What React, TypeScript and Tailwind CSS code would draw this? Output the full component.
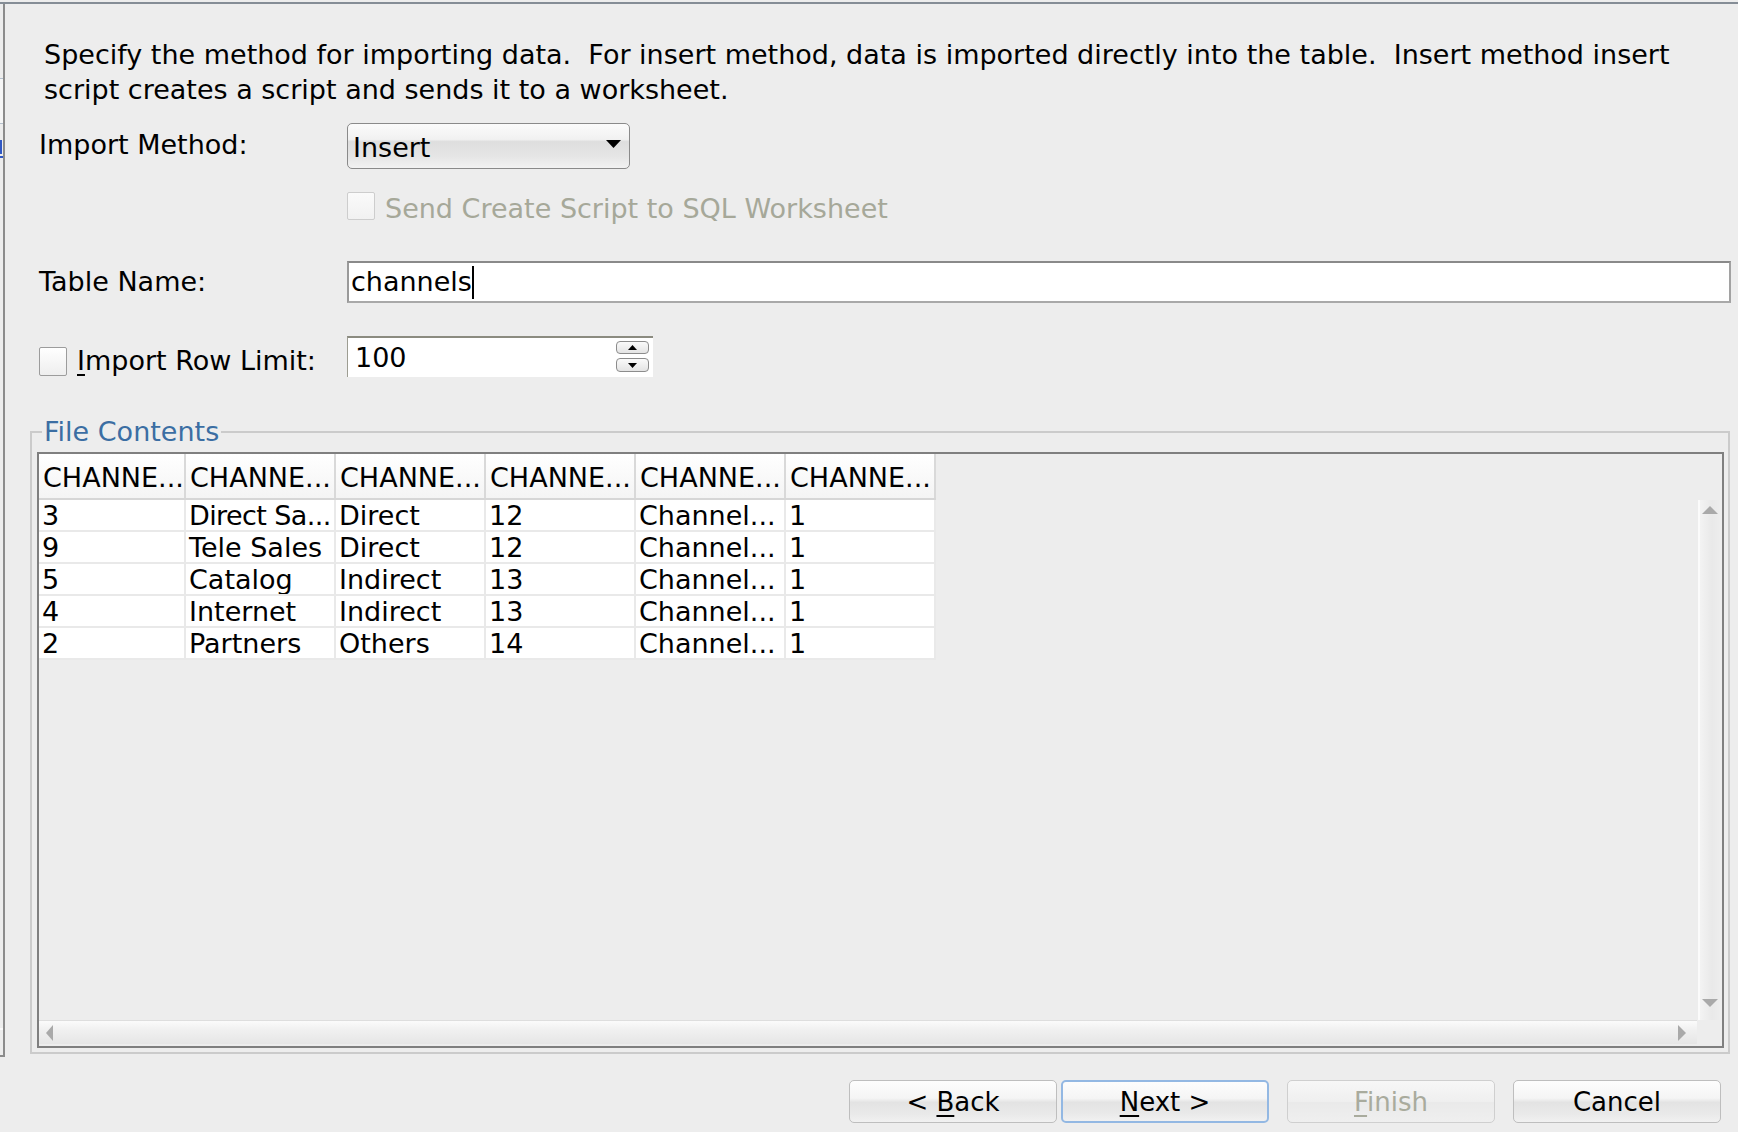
import React from "react";

const TriDown = ({ w = 14, h = 8, color = "#000" }: { w?: number; h?: number; color?: string }) => (
  <svg width={w} height={h} viewBox={`0 0 ${w} ${h}`}>
    <polygon points={`0,0 ${w},0 ${w / 2},${h}`} fill={color} />
  </svg>
);
const TriUp = ({ w = 14, h = 8, color = "#000" }: { w?: number; h?: number; color?: string }) => (
  <svg width={w} height={h} viewBox={`0 0 ${w} ${h}`}>
    <polygon points={`0,${h} ${w},${h} ${w / 2},0`} fill={color} />
  </svg>
);
const TriLeft = ({ w = 8, h = 16, color = "#000" }: { w?: number; h?: number; color?: string }) => (
  <svg width={w} height={h} viewBox={`0 0 ${w} ${h}`}>
    <polygon points={`${w},0 ${w},${h} 0,${h / 2}`} fill={color} />
  </svg>
);
const TriRight = ({ w = 8, h = 16, color = "#000" }: { w?: number; h?: number; color?: string }) => (
  <svg width={w} height={h} viewBox={`0 0 ${w} ${h}`}>
    <polygon points={`0,0 0,${h} ${w},${h / 2}`} fill={color} />
  </svg>
);

const headers = ["CHANNE...", "CHANNE...", "CHANNE...", "CHANNE...", "CHANNE...", "CHANNE..."];
const rows = [
  ["3", "Direct Sa...", "Direct", "12", "Channel...", "1"],
  ["9", "Tele Sales", "Direct", "12", "Channel...", "1"],
  ["5", "Catalog", "Indirect", "13", "Channel...", "1"],
  ["4", "Internet", "Indirect", "13", "Channel...", "1"],
  ["2", "Partners", "Others", "14", "Channel...", "1"],
];
const colW = ["w-[147px]", "w-[150px]", "w-[150px]", "w-[150px]", "w-[150px]", "w-[150px]"];

const btnBase =
  "w-[208px] h-[43px] rounded-[5px] flex items-center justify-center text-[26px] leading-[30px] bg-[linear-gradient(to_bottom,#fdfdfd_0%,#f5f5f5_42%,#e3e3e3_52%,#e9e9e9_80%,#f1f1f1_100%)]";

export default function App() {
  return (
    <div className="w-[1738px] h-[1132px] bg-[#ededed] pt-[2px] overflow-hidden font-['DejaVu_Sans',sans-serif] text-[27px] text-black">
      <div className="flex h-full border-t-2 border-[#858d96]">
        {/* left strip: edge of neighbouring panel */}
        <div className="w-[5px] h-[1053px] flex flex-col border-r-2 border-b-2 border-[#8c8c8c]">
          <div className="h-[74px]" />
          <div className="h-[1px] bg-[#b4c0cc]" />
          <div className="h-[44px] bg-[#f6f6f6]" />
          <div className="h-[1px] bg-[#b4c0cc]" />
          <div className="mt-[16px] h-[14px] w-[2px] bg-[#2f57c4]" />
          <div className="mt-[2px] h-[2px] w-[3px] bg-[#2f57c4]" />
          <div className="flex-1" />
          <div className="h-[2px] bg-[#fafafa]" />
          <div className="h-[25px]" />
        </div>

        <main className="flex-1 flex flex-col pl-[25px] pr-[8px]">
          {/* description */}
          <div className="mt-[33px] pl-[14px] leading-[35px] whitespace-pre">
            {"Specify the method for importing data.  For insert method, data is imported directly into the table.  Insert method insert\nscript creates a script and sends it to a worksheet."}
          </div>

          {/* import method */}
          <div className="mt-[16px] flex items-center pl-[9px]">
            <div className="w-[308px] leading-[30px] -mt-[3px]">Import Method:</div>
            <div className="w-[283px] h-[46px] rounded-[5px] border-[1.5px] border-[#8a8a8a] flex items-center justify-between pl-[5px] pr-[8px] bg-[linear-gradient(to_bottom,#fbfbfb_0%,#f1f1f1_35%,#dedede_40%,#e6e6e6_75%,#f2f2f2_100%)]">
              <span className="leading-[30px] mt-[4px]">Insert</span>
              <span className="-mt-[4px]">
                <TriDown w={15} h={8} />
              </span>
            </div>
          </div>

          {/* send create script (disabled) */}
          <div className="mt-[23px] flex items-center pl-[317px] h-[28px]">
            <div className="w-[28px] h-[28px] border-[1.5px] border-[#cdcdcd] rounded-[2px] bg-[linear-gradient(to_bottom,#fafafa,#f1f1f1)]" />
            <span className="ml-[10px] leading-[28px] mt-[5px] text-[#a6a899] whitespace-nowrap">Send Create Script to SQL Worksheet</span>
          </div>

          {/* table name */}
          <div className="mt-[41px] flex items-center pl-[9px] -mr-[1px]">
            <div className="w-[308px] leading-[30px]">Table Name:</div>
            <div className="flex-1 h-[42px] bg-white border-2 border-t-[#8a8a8a] border-l-[#9a9a9a] border-r-[#a2a2a2] border-b-[#a9a9a9] flex items-center pl-[2px]">
              <span className="leading-[30px]">channels</span>
              <span className="w-[2px] h-[33px] bg-black" />
            </div>
          </div>

          {/* import row limit */}
          <div className="mt-[33px] flex items-center pl-[9px] h-[41px]">
            <div className="w-[308px] flex items-center mt-[9px]">
              <div className="w-[28px] h-[29px] border-[1.5px] border-[#9c9c9c] rounded-[2px] bg-[linear-gradient(to_bottom,#ffffff,#eeeeee)]" />
              <span className="ml-[10px] leading-[30px] whitespace-nowrap">
                <span className="underline underline-offset-[4px] decoration-[2px]">I</span>mport Row Limit:
              </span>
            </div>
            <div className="w-[306px] h-[41px] bg-white border-t-2 border-l border-t-[#8b8b80] border-l-[#9d9d92] flex items-center justify-between pl-[7px] pr-[4px]">
              <span className="leading-[30px]">100</span>
              <div className="flex flex-col gap-[4px] mb-[2px]">
                <div className="w-[33px] h-[13px] rounded-[4px] border-[1.5px] border-[#8c8c8c] bg-[linear-gradient(to_bottom,#fafafa,#e4e4e4)] flex items-center justify-center">
                  <TriUp w={9} h={5} />
                </div>
                <div className="w-[33px] h-[14px] rounded-[4px] border-[1.5px] border-[#8c8c8c] bg-[linear-gradient(to_bottom,#fafafa,#e4e4e4)] flex items-center justify-center">
                  <TriDown w={9} h={5} />
                </div>
              </div>
            </div>
          </div>

          {/* file contents */}
          <fieldset className="mt-[40px] border-2 border-[#cbcbcb] pt-[5px] pb-[4px] pl-[5px] pr-[4px]">
            <legend className="ml-[5px] px-[2px] leading-[30px] text-[#3b6ea3]">File Contents</legend>
            <div className="h-[596px] border-2 border-[#7f7f7f] flex flex-col">
              <div className="flex flex-1 min-h-0">
                <div className="flex-1">
                  <div className="flex h-[46px] border-b-2 border-[#d6d6d6] w-[897px]">
                    {headers.map((h, i) => (
                      <div
                        key={i}
                        className={`${colW[i]} border-r-2 border-[#d9d9d9] bg-[linear-gradient(to_bottom,#ffffff,#f4f4f4)] pl-[4px] pt-[4px] leading-[40px] whitespace-nowrap overflow-hidden`}
                      >
                        {h}
                      </div>
                    ))}
                  </div>
                  {rows.map((r, ri) => (
                    <div key={ri} className="flex h-[32px] w-[897px] bg-white border-b-2 border-[#e9e9e9]">
                      {r.map((c, ci) => (
                        <div
                          key={ci}
                          className={`${colW[ci]} border-r-2 border-[#e9e9e9] pl-[3px] pt-[2px] leading-[28px] whitespace-nowrap overflow-hidden ${c === "Direct Sa..." ? "tracking-[-0.6px]" : ""}`}
                        >
                          {c}
                        </div>
                      ))}
                    </div>
                  ))}
                </div>
                {/* vertical scrollbar */}
                <div className="w-[25px] flex flex-col pl-[1px] pr-[2px]">
                  <div className="h-[46px]" />
                  <div className="flex-1 flex flex-col items-center justify-between pt-[6px] pb-[13px] border-l-2 border-[#fbfbfb] bg-[linear-gradient(to_right,#f3f3f3,#e9e9e9_60%,#ededed)]">
                    <TriUp w={16} h={8} color="#a9a9a9" />
                    <TriDown w={16} h={8} color="#a9a9a9" />
                  </div>
                </div>
              </div>
              {/* horizontal scrollbar */}
              <div className="flex h-[26px]">
                <div className="flex-1 pb-[2px] flex flex-col">
                  <div className="h-[1px] bg-[#dedede]" />
                  <div className="flex-1 flex items-center justify-between pl-[7px] pr-[11px] bg-[linear-gradient(to_bottom,#fbfbfb,#f0f0f0_40%,#e6e6e6)]">
                    <TriLeft w={7} h={16} color="#a9a9a9" />
                    <TriRight w={8} h={16} color="#a9a9a9" />
                  </div>
                </div>
                <div className="w-[25px]" />
              </div>
            </div>
          </fieldset>

          {/* buttons */}
          <div className="mt-[26px] flex justify-end pr-[9px]">
            <div className={`${btnBase} border border-[#bebebe]`}>
              <span>
                {"< "}
                <span className="underline underline-offset-[4px] decoration-[2px]">B</span>ack
              </span>
            </div>
            <div className={`${btnBase} ml-[4px] border-2 border-[#93b8e3]`}>
              <span>
                <span className="underline underline-offset-[4px] decoration-[2px]">N</span>ext {">"}
              </span>
            </div>
            <div className="ml-[18px] w-[208px] h-[43px] rounded-[5px] border border-[#cfcfcf] flex items-center justify-center text-[26px] leading-[30px] text-[#a9ab9d] bg-[linear-gradient(to_bottom,#f7f7f7,#efefef_50%,#eaeaea_52%,#efefef)]">
              <span>
                <span className="underline underline-offset-[4px] decoration-[2px]">F</span>inish
              </span>
            </div>
            <div className={`${btnBase} ml-[18px] border border-[#bebebe]`}>Cancel</div>
          </div>
        </main>
      </div>
    </div>
  );
}
